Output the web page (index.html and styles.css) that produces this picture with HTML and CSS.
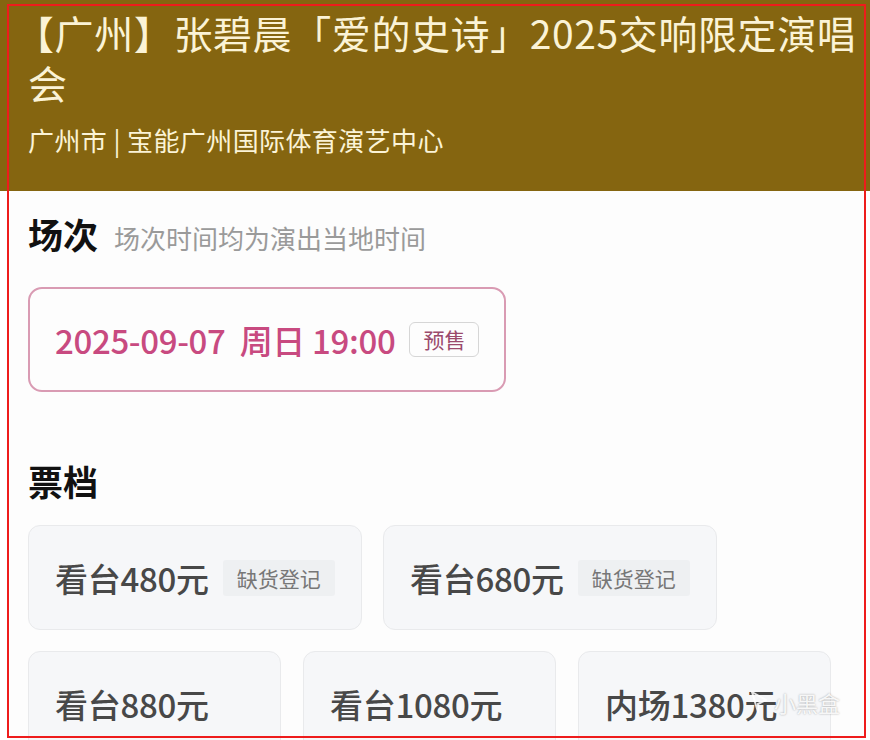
FILE: index.html
```html
<!DOCTYPE html>
<html lang="zh">
<head>
<meta charset="utf-8">
<title>张碧晨 演唱会</title>
<link rel="stylesheet" href="styles.css">
</head>
<body>
<div class="page">
  <header class="header">
    <h1 class="title">【广州】张碧晨「爱的史诗」2025交响限定演唱会</h1>
    <p class="venue">广州市 | 宝能广州国际体育演艺中心</p>
  </header>
  <main class="panel">
    <div class="section-head">
      <h2 class="section-title">场次</h2>
      <span class="section-note">场次时间均为演出当地时间</span>
    </div>
    <div class="session">
      <span class="session-text">2025-09-07&nbsp;&nbsp;周日 19:00</span>
      <span class="presale">预售</span>
    </div>
    <h2 class="section-title tickets-title">票档</h2>
    <div class="tickets">
      <div class="row">
        <div class="ticket wide"><span class="price">看台480元</span><span class="tag">缺货登记</span></div>
        <div class="ticket wide"><span class="price">看台680元</span><span class="tag">缺货登记</span></div>
      </div>
      <div class="row">
        <div class="ticket narrow"><span class="price">看台880元</span></div>
        <div class="ticket narrow"><span class="price">看台1080元</span></div>
        <div class="ticket narrow"><span class="price">内场1380元</span></div>
      </div>
    </div>
  </main>
  <div class="watermark">
    <svg class="wm-logo" width="22" height="26" viewBox="0 0 22 26"><path d="M4 3 L18 11 L10 15 L10 23 Z" fill="none" stroke="rgba(255,255,255,0.85)" stroke-width="2" stroke-linejoin="round"/></svg>
    <span>小黑盒</span>
  </div>
  <div class="frame"></div>
</div>
</body>
</html>
```
FILE: styles.css
```css
* { box-sizing: border-box; }
html, body { margin: 0; padding: 0; }
body {
  background: #ffffff;
  font-family: "Noto Sans CJK SC", "Noto Sans", sans-serif;
  width: 870px;
  height: 740px;
  overflow: hidden;
}
.page {
  position: relative;
  width: 870px;
  height: 740px;
}
.header {
  background: #856510;
  padding: 7px 0 33px 28px;
  color: #fbf3d6;
}
.title {
  margin: 0;
  font-size: 39px;
  font-weight: 400;
  line-height: 50px;
  letter-spacing: 0.6px;
  text-indent: -13px;
}
.venue {
  margin: 15px 0 0;
  font-size: 26px;
  line-height: 36px;
  font-weight: 400;
  letter-spacing: 0.4px;
}
.panel {
  background: #fdfdfd;
  margin: 0 6px 0 8px;
  padding: 20px 0 0 20px;
  border-radius: 8px 8px 0 0;
}
.section-head {
  display: flex;
  align-items: baseline;
  gap: 16px;
}
.section-title {
  margin: 0;
  font-size: 35px;
  font-weight: 700;
  line-height: 46px;
  color: #111;
}
.section-note {
  font-size: 26px;
  color: #9a9a9a;
}
.session {
  margin-top: 30px;
  width: 478px;
  height: 105px;
  border: 2px solid #d99bb3;
  border-radius: 14px;
  display: flex;
  align-items: center;
  padding-left: 25px;
  gap: 14px;
}
.session-text {
  font-size: 33px;
  font-weight: 500;
  color: #c84a80;
  letter-spacing: -0.35px;
}
.presale {
  font-size: 21px;
  color: #9b4a6c;
  border: 1.5px solid #d6d6d6;
  border-radius: 6px;
  padding: 2px 13px;
  line-height: 29px;
}
.tickets-title { margin-top: 66px; }
.tickets {
  margin-top: 21px;
  display: flex;
  flex-direction: column;
  gap: 21px;
}
.row {
  display: flex;
  gap: 21px;
}
.ticket {
  height: 105px;
  background: #f6f7f9;
  border: 1.5px solid #e9eaec;
  border-radius: 12px;
  display: flex;
  align-items: center;
  padding-left: 26px;
  gap: 14px;
}
.ticket.wide { width: 334px; }
.ticket.narrow { width: 253px; }
.row .ticket.narrow + .ticket.narrow { margin-left: 1px; }
.price {
  font-size: 33px;
  font-weight: 500;
  color: #484848;
  letter-spacing: -0.3px;
}
.tag {
  font-size: 21px;
  color: #777;
  background: #eef0f2;
  padding: 0 14px;
  line-height: 36px;
  border-radius: 3px;
}
.watermark {
  position: absolute;
  left: 748px;
  top: 686px;
  display: flex;
  align-items: center;
  gap: 4px;
  color: rgba(255,255,255,0.9);
  font-size: 22px;
  text-shadow: 0 0 2px rgba(0,0,0,0.35);
}
.frame {
  position: absolute;
  left: 7px;
  top: 4px;
  width: 859px;
  height: 734px;
  border: 2px solid #ee1c1c;
  pointer-events: none;
}
```
